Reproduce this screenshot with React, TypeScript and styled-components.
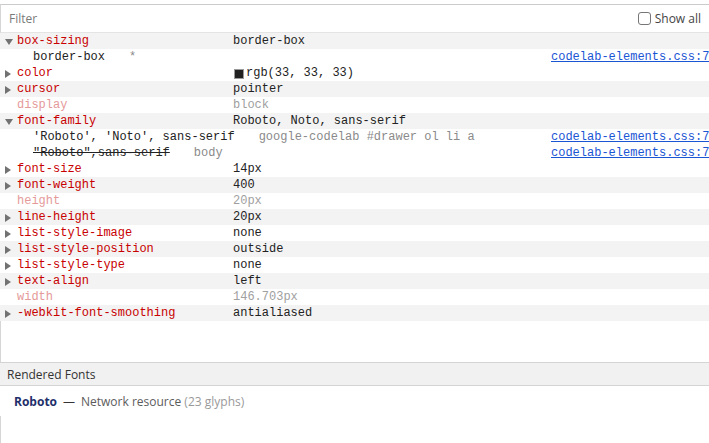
import React from 'react';
import styled, { createGlobalStyle } from 'styled-components';

const GlobalStyle = createGlobalStyle`
  html, body {
    margin: 0;
    padding: 0;
    background: #ffffff;
  }
  * {
    box-sizing: border-box;
  }
`;

const MONO = `"Liberation Mono", "DejaVu Sans Mono", monospace`;
const SANS = `"Open Sans", "Noto Sans", "Liberation Sans", sans-serif`;

interface Trace {
  value: string;
  selector: string;
  source?: string;
  overridden?: boolean;
}

interface Prop {
  name: string;
  value: string;
  expandable?: boolean;
  inactive?: boolean;
  swatch?: string;
  traces?: Trace[];
}

const props: Prop[] = [
  {
    name: 'box-sizing',
    value: 'border-box',
    expandable: true,
    traces: [{ value: 'border-box', selector: '*', source: 'codelab-elements.css:7' }],
  },
  { name: 'color', value: 'rgb(33, 33, 33)', swatch: '#212121' },
  { name: 'cursor', value: 'pointer' },
  { name: 'display', value: 'block', inactive: true },
  {
    name: 'font-family',
    value: 'Roboto, Noto, sans-serif',
    expandable: true,
    traces: [
      {
        value: "'Roboto', 'Noto', sans-serif",
        selector: 'google-codelab #drawer ol li a',
        source: 'codelab-elements.css:7',
      },
      { value: '"Roboto",sans-serif', selector: 'body', source: 'codelab-elements.css:7', overridden: true },
    ],
  },
  { name: 'font-size', value: '14px' },
  { name: 'font-weight', value: '400' },
  { name: 'height', value: '20px', inactive: true },
  { name: 'line-height', value: '20px' },
  { name: 'list-style-image', value: 'none' },
  { name: 'list-style-position', value: 'outside' },
  { name: 'list-style-type', value: 'none' },
  { name: 'text-align', value: 'left' },
  { name: 'width', value: '146.703px', inactive: true },
  { name: '-webkit-font-smoothing', value: 'antialiased' },
];

export default function App() {
  return (
    <>
      <GlobalStyle />
      <Styled.Panel>
        <Styled.TopGap />
        <Styled.FilterBar>
          <Styled.FilterText>Filter</Styled.FilterText>
          <Styled.ShowAll>
            <Styled.Checkbox />
            Show all
          </Styled.ShowAll>
        </Styled.FilterBar>

        <Styled.List>
          {props.map((p, i) => (
            <React.Fragment key={p.name}>
              <Styled.PropRow $striped={i % 2 === 0}>
                <Styled.ArrowCell>
                  {!p.inactive && <Styled.Arrow $open={!!p.expandable} />}
                </Styled.ArrowCell>
                <Styled.Name $inactive={!!p.inactive}>{p.name}</Styled.Name>
                <Styled.Value $inactive={!!p.inactive}>
                  {p.swatch && <Styled.Swatch style={{ background: p.swatch }} />}
                  {p.value}
                </Styled.Value>
              </Styled.PropRow>
              {p.traces?.map(t => (
                <Styled.TraceRow key={t.value}>
                  <Styled.TraceMain>
                    <Styled.TraceValue $overridden={!!t.overridden}>{t.value}</Styled.TraceValue>
                    <Styled.Selector>{t.selector}</Styled.Selector>
                  </Styled.TraceMain>
                  {t.source && <Styled.Link>{t.source}</Styled.Link>}
                </Styled.TraceRow>
              ))}
            </React.Fragment>
          ))}
        </Styled.List>

        <Styled.Spacer />

        <Styled.SectionHeader>Rendered Fonts</Styled.SectionHeader>
        <Styled.FontLine>
          <Styled.FontName>Roboto</Styled.FontName>
          <Styled.Dash>—</Styled.Dash>
          Network resource <Styled.Glyphs>(23 glyphs)</Styled.Glyphs>
        </Styled.FontLine>
        <Styled.Rest />
      </Styled.Panel>
    </>
  );
}

const Styled = {
  Panel: styled.div`
    display: flex;
    flex-direction: column;
    width: 709px;
    height: 443px;
    overflow: hidden;
    background: #ffffff;
  `,
  TopGap: styled.div`
    height: 4px;
    flex-shrink: 0;
  `,
  FilterBar: styled.div`
    display: flex;
    align-items: center;
    justify-content: space-between;
    height: 29px;
    flex-shrink: 0;
    padding: 0 8px 0 8px;
    border-top: 1px solid #cbcbcb;
    border-left: 1px solid #d6d6d6;
    border-bottom: 1px solid #e4e4e4;
    font-family: ${SANS};
    font-size: 12px;
  `,
  FilterText: styled.span`
    color: #7a7a7a;
  `,
  ShowAll: styled.label`
    display: flex;
    align-items: center;
    gap: 4px;
    color: #444;
  `,
  Checkbox: styled.span`
    width: 13px;
    height: 13px;
    border: 1px solid #767676;
    border-radius: 3px;
    background: #fff;
  `,
  List: styled.div`
    display: flex;
    flex-direction: column;
    flex-shrink: 0;
  `,
  PropRow: styled.div<{ $striped: boolean }>`
    display: grid;
    grid-template-columns: 17px 216px 1fr;
    align-items: center;
    height: 16px;
    padding-top: 1px;
    background: ${p => (p.$striped ? '#f3f3f3' : '#ffffff')};
    font-family: ${MONO};
    font-size: 12px;
    line-height: 15px;
    white-space: nowrap;
  `,
  ArrowCell: styled.div`
    display: flex;
    align-items: center;
    padding-left: 5px;
    height: 15px;
  `,
  Arrow: styled.span<{ $open: boolean }>`
    width: 0;
    height: 0;
    ${p =>
      p.$open
        ? `border-top: 6px solid #727272;
           border-left: 4px solid transparent;
           border-right: 4px solid transparent;`
        : `border-left: 6px solid #727272;
           border-top: 4px solid transparent;
           border-bottom: 4px solid transparent;`}
  `,
  Name: styled.span<{ $inactive: boolean }>`
    color: ${p => (p.$inactive ? '#e59a9a' : '#c80000')};
  `,
  Value: styled.span<{ $inactive: boolean }>`
    display: flex;
    align-items: center;
    color: ${p => (p.$inactive ? '#a0a0a0' : '#222222')};
  `,
  Swatch: styled.span`
    width: 10px;
    height: 10px;
    margin: 0 2px 0 1px;
    border: 1px solid #9a9a9a;
  `,
  TraceRow: styled.div`
    display: grid;
    grid-template-columns: 518px 1fr;
    height: 16px;
    padding: 1px 0 0 33px;
    font-family: ${MONO};
    font-size: 12px;
    line-height: 15px;
    white-space: nowrap;
  `,
  TraceMain: styled.div`
    display: flex;
    gap: 24px;
    overflow: hidden;
  `,
  TraceValue: styled.span<{ $overridden: boolean }>`
    color: #222222;
    text-decoration: ${p => (p.$overridden ? 'line-through' : 'none')};
  `,
  Selector: styled.span`
    color: #8a8a8a;
  `,
  Link: styled.span`
    color: #1a55d4;
    text-decoration: underline;
  `,
  Spacer: styled.div`
    height: 41px;
    flex-shrink: 0;
    border-left: 1px solid #d6d6d6;
  `,
  SectionHeader: styled.div`
    display: flex;
    align-items: center;
    height: 24px;
    flex-shrink: 0;
    padding-left: 7px;
    background: #f1f1f1;
    border-top: 1px solid #d4d4d4;
    border-bottom: 1px solid #d4d4d4;
    font-family: ${SANS};
    font-size: 12px;
    color: #333333;
  `,
  FontLine: styled.div`
    display: flex;
    align-items: center;
    height: 30px;
    flex-shrink: 0;
    padding-left: 14px;
    font-family: ${SANS};
    font-size: 12px;
    color: #5c5c5c;
    white-space: pre;
  `,
  FontName: styled.span`
    font-weight: 700;
    color: #1f2f6b;
  `,
  Dash: styled.span`
    margin: 0 6px;
    color: #333;
  `,
  Glyphs: styled.span`
    color: #999999;
  `,
  Rest: styled.div`
    flex: 1;
    border-left: 1px solid #d6d6d6;
  `,
};
